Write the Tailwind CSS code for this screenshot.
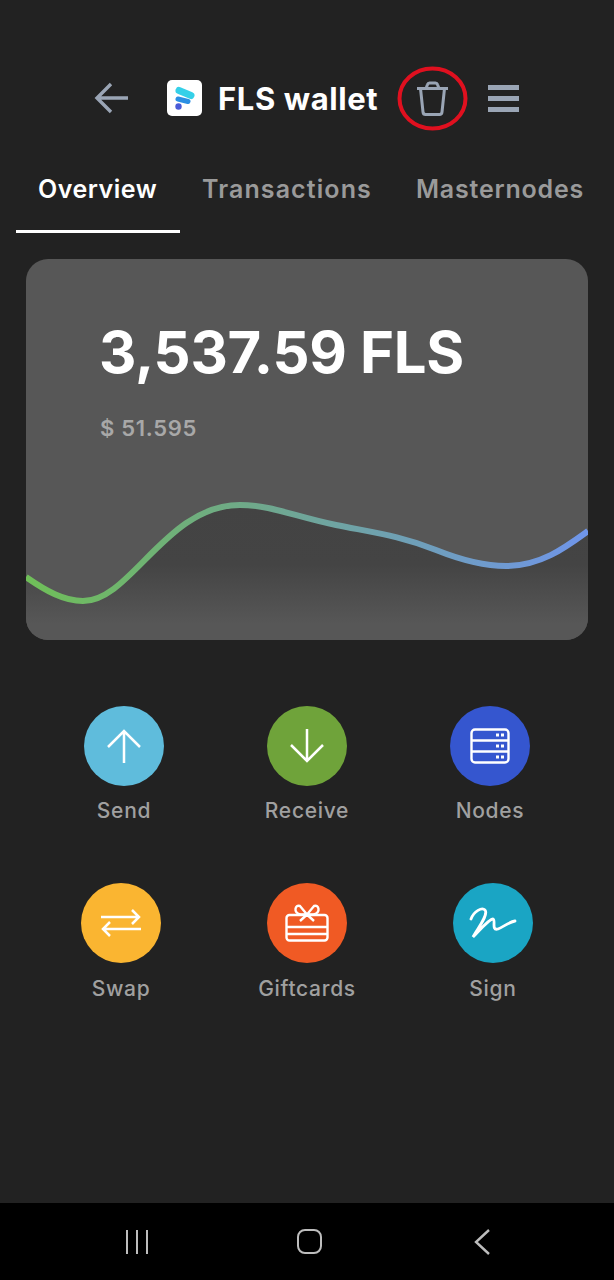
<!DOCTYPE html>
<html lang="en">
  <head>
    <meta charset="UTF-8" />
    <meta name="viewport" content="width=device-width, initial-scale=1.0" />
    <title>FLS wallet</title>
    <script src="https://cdn.jsdelivr.net/npm/@tailwindcss/browser@4"></script>
  </head>
  <body class="bg-[#222222] font-['Inter',sans-serif]">
    <div class="w-[614px] h-[1280px] flex flex-col overflow-hidden">
      <!-- header -->
      <div class="h-[160px] flex items-center shrink-0 pt-[36px] pl-[94px]">
        <svg class="w-[36px] h-[36px]" viewBox="0 0 36 36" fill="none" stroke="#9aa5b5" stroke-width="3.4">
          <path d="M34 18H4M17 4 3 18l14 14" />
        </svg>
        <div class="ml-[37px] w-[35px] h-[36px] rounded-[5px] bg-white flex items-center justify-center">
          <svg class="w-[22px] h-[24px]" viewBox="0 0 22 24" fill="none" stroke-linecap="round">
            <path d="M5 4.500 17 9.500" stroke="#35d0e8" stroke-width="7" />
            <path d="M4 13 14 15.500" stroke="#2b8fe3" stroke-width="5" />
            <circle cx="4.500" cy="20.500" r="3.200" fill="#4a5bd8" />
          </svg>
        </div>
        <div class="ml-[16px] w-[160px] text-[31px] leading-none font-bold tracking-[0.6px] text-white whitespace-nowrap">FLS wallet</div>
        <div class="relative ml-[39px] w-[31px] h-[35px]">
          <svg class="w-[31px] h-[35px]" viewBox="0 0 31 35" fill="none" stroke="#9aa5b5" stroke-width="3" stroke-linejoin="round">
            <path d="M0 7.500h31M3.500 7.500l2.500 23.500q.3 2.500 2.500 2.500h14q2.200 0 2.500-2.500L27.500 7.500M9 7.500l1.500-4q.5-1.500 2-1.500h6q1.500 0 2 1.500l1.500 4" />
          </svg>
          <svg class="absolute left-[-20px] top-[-15px] w-[71px] h-[65px]" viewBox="0 0 71 65" fill="none" stroke="#e0101f" stroke-width="4">
            <ellipse cx="35.500" cy="32.500" rx="33" ry="30" />
          </svg>
        </div>
        <div class="ml-[40px] w-[31px] flex flex-col gap-[6px]">
          <div class="h-[5px] bg-[#9aa5b5]"></div>
          <div class="h-[5px] bg-[#9aa5b5]"></div>
          <div class="h-[5px] bg-[#9aa5b5]"></div>
        </div>
      </div>

      <!-- tabs -->
      <div class="h-[74px] shrink-0 flex text-[25px] leading-none font-semibold text-[#9a9a9a] whitespace-nowrap">
        <div class="ml-[16px] w-[164px] h-[73px] border-b-[3px] border-white text-white pl-[22px] pt-[17px] tracking-[0.5px]">Overview</div>
        <div class="ml-[22px] w-[214px] pt-[17px] tracking-[1.1px]">Transactions</div>
        <div class="pt-[17px] tracking-[0.8px]">Masternodes</div>
      </div>

      <!-- balance card -->
      <div class="relative mt-[25px] ml-[26px] w-[562px] h-[381px] shrink-0 rounded-[22px] bg-[#575757] overflow-hidden">
        <div class="pl-[73px] pt-[58px] text-[58px] leading-[70px] font-bold tracking-[-0.3px] text-white whitespace-nowrap">3,537.59 FLS</div>
        <div class="pl-[74px] mt-[26px] text-[22px] leading-[30px] font-semibold tracking-[0.7px] text-[#a8a8a8]">$ 51.595</div>
        <svg class="absolute left-0 top-[230px] w-[562px] h-[151px]" viewBox="0 0 562 151" fill="none">
          <defs>
            <linearGradient id="line" x1="0" y1="0" x2="562" y2="0" gradientUnits="userSpaceOnUse">
              <stop offset="0" stop-color="#6fbf58" />
              <stop offset="0.4" stop-color="#6fa98a" />
              <stop offset="1" stop-color="#6f95ea" />
            </linearGradient>
            <linearGradient id="area" x1="0" y1="16" x2="0" y2="135" gradientUnits="userSpaceOnUse">
              <stop offset="0" stop-color="#434343" />
              <stop offset="0.5" stop-color="#444444" />
              <stop offset="1" stop-color="#575757" />
            </linearGradient>
          </defs>
          <path d="M0 88C20 102 38 112 57 112C105 112 140 16 214 16C245 16 270 28 310 36C350 44 375 47 410 61C440 73 460 77 480 77C515 77 540 58 562 42V151H0Z" fill="url(#area)" />
          <path d="M0 88C20 102 38 112 57 112C105 112 140 16 214 16C245 16 270 28 310 36C350 44 375 47 410 61C440 73 460 77 480 77C515 77 540 58 562 42" stroke="url(#line)" stroke-width="6" />
        </svg>
      </div>

      <!-- actions -->
      <div class="mt-[66px] pl-[84px] flex gap-[103px] text-[21px] leading-[28px] font-medium tracking-[0.7px] text-[#a0a0a0] shrink-0">
        <div class="w-[80px] flex flex-col items-center gap-[11px]">
          <div class="w-[80px] h-[80px] rounded-full bg-[#5fbcdc] flex items-center justify-center">
            <svg class="w-[34px] h-[34px]" viewBox="0 0 34 34" fill="none" stroke="white" stroke-width="2.500"><path d="M17 34V2M1 18 17 2l16 16" /></svg>
          </div>
          <span>Send</span>
        </div>
        <div class="w-[80px] flex flex-col items-center gap-[11px]">
          <div class="w-[80px] h-[80px] rounded-full bg-[#6fa33a] flex items-center justify-center">
            <svg class="w-[34px] h-[34px]" viewBox="0 0 34 34" fill="none" stroke="white" stroke-width="2.500"><path d="M17 0v32M1 16l16 16 16-16" /></svg>
          </div>
          <span>Receive</span>
        </div>
        <div class="w-[80px] flex flex-col items-center gap-[11px]">
          <div class="w-[80px] h-[80px] rounded-full bg-[#3556cf] flex items-center justify-center">
            <svg class="w-[40px] h-[36px]" viewBox="0 0 40 36" fill="none" stroke="white" stroke-width="2.400">
              <rect x="1.500" y="1.500" width="37" height="33" rx="3.500" />
              <path d="M1.500 12.500h37M1.500 23.500h37" />
              <path d="M26 7h3M31 7h3M26 18h3M31 18h3M26 29h3M31 29h3" stroke-width="3" />
            </svg>
          </div>
          <span>Nodes</span>
        </div>
      </div>
      <div class="mt-[58px] pl-[81px] flex gap-[106px] text-[21px] leading-[28px] font-medium tracking-[0.7px] text-[#a0a0a0] shrink-0">
        <div class="w-[80px] flex flex-col items-center gap-[12px]">
          <div class="w-[80px] h-[80px] rounded-full bg-[#fab531] flex items-center justify-center">
            <svg class="w-[40px] h-[28px]" viewBox="0 0 40 28" fill="none" stroke="white" stroke-width="2.500"><path d="M0 8h38M31 1l7 7-7 7M40 20H2M9 13l-7 7 7 7" /></svg>
          </div>
          <span>Swap</span>
        </div>
        <div class="w-[80px] flex flex-col items-center gap-[12px]">
          <div class="w-[80px] h-[80px] rounded-full bg-[#f05a24] flex items-center justify-center">
            <svg class="w-[44px] h-[38px]" viewBox="0 0 44 38" fill="none" stroke="white" stroke-width="2.400">
              <rect x="1.500" y="11" width="41" height="25.500" rx="3" />
              <path d="M1.500 23h41M1.500 30h41" />
              <path d="M15 17 22 10.500 29 17M22 10.500 15 2q-4-1-4.500 3t5 5.500H22Zm0 0L29 2q4-1 4.500 3t-5 5.500H22Z" />
            </svg>
          </div>
          <span>Giftcards</span>
        </div>
        <div class="w-[80px] flex flex-col items-center gap-[12px]">
          <div class="w-[80px] h-[80px] rounded-full bg-[#1aa5c4] flex items-center justify-center">
            <svg class="w-[48px] h-[32px]" viewBox="0 0 48 32" fill="none" stroke="white" stroke-width="2.800" stroke-linecap="round">
              <path d="M2 12C5 4 13 0 16 3 20 8 8 22 4 30 10 24 20 12 24 12 27 13 22 24 29 22 34 20 40 15 46 14" />
            </svg>
          </div>
          <span>Sign</span>
        </div>
      </div>

      <!-- android nav bar -->
      <div class="mt-auto h-[77px] bg-black shrink-0 flex items-center pl-[126px]">
        <div class="w-[24px] flex gap-[8px]">
          <div class="w-[2px] h-[24px] bg-[#bdbdbd]"></div>
          <div class="w-[2px] h-[24px] bg-[#bdbdbd]"></div>
          <div class="w-[2px] h-[24px] bg-[#bdbdbd]"></div>
        </div>
        <div class="ml-[147px] w-[25px] h-[25px] rounded-[8px] border-2 border-[#bdbdbd]"></div>
        <svg class="ml-[151px] w-[18px] h-[28px]" viewBox="0 0 18 28" fill="none" stroke="#bdbdbd" stroke-width="2.400"><path d="M16 2 3 14l13 12" /></svg>
      </div>
    </div>
  </body>
</html>
